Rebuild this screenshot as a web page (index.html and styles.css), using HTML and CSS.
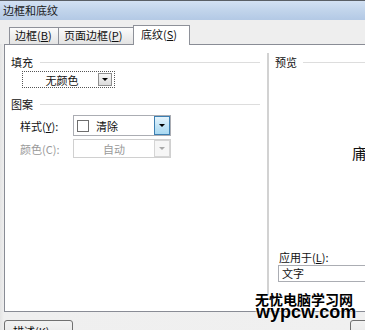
FILE: index.html
```html
<!DOCTYPE html>
<html>
<head>
<meta charset="utf-8">
<link rel="stylesheet" href="styles.css">
</head>
<body>
<div class="titlebar">边框和底纹</div>
<div class="tabs">
  <div class="tab t1">边框(<u>B</u>)</div>
  <div class="tab t2">页面边框(<u>P</u>)</div>
  <div class="tab t3 active">底纹(<u>S</u>)</div>
</div>
<div class="panel">
  <div class="left">
    <div class="head"><span>填充</span></div>
    <div class="combo">
      <span class="combo-text">无颜色</span>
      <span class="mini-btn"><i class="arrow"></i></span>
    </div>
    <div class="head pattern"><span>图案</span></div>
    <div class="row">
      <span class="lbl">样式(<u>Y</u>):</span>
      <div class="select style-sel">
        <span class="swatch"></span>
        <span class="sel-text">清除</span>
        <span class="drop hot"><i class="arrow"></i></span>
      </div>
    </div>
    <div class="row row2 disabled">
      <span class="lbl">颜色(C):</span>
      <div class="select color-sel">
        <span class="sel-text center">自动</span>
        <span class="drop"><i class="arrow"></i></span>
      </div>
    </div>
  </div>
  <div class="right">
    <div class="head"><span>预览</span></div>
    <div class="preview"><span class="sample">庯</span></div>
    <div class="apply-lbl">应用于(<u>L</u>):</div>
    <div class="apply-box">文字</div>
  </div>
</div>
<div class="footer">
  <div class="btn">描述(<u>K</u>)...</div>
  <div class="btn btn-right"></div>
</div>
<div class="watermark">
  <div class="wm1">无忧电脑学习网</div>
  <div class="wm2">wypcw.com</div>
</div>
</body>
</html>
```

FILE: styles.css
```css
html, body {
  margin: 0;
  padding: 0;
}
body {
  width: 365px;
  height: 330px;
  overflow: hidden;
  position: relative;
  background: linear-gradient(90deg, #e4e4e4 0, #efefef 4px, #f0f0f0 100%);
  font-family: "Noto Sans CJK SC", "Liberation Sans", sans-serif;
  font-size: 11px;
  line-height: 14px;
  color: #111;
}
u { text-decoration: underline; }

.titlebar {
  height: 19px;
  border-top: 1px solid #5a5f66;
  background: linear-gradient(180deg, #d3e1f3 0%, #c1d4eb 50%, #b3c9e5 100%);
  padding-left: 3px;
  line-height: 19px;
  font-size: 11px;
  color: #1a1a1a;
}

.tabs {
  display: flex;
  align-items: flex-end;
  height: 24px;
  padding-left: 9px;
  background: #eeeeee;
}
.tab {
  box-sizing: border-box;
  height: 17px;
  line-height: 15px;
  border: 1px solid #8e9199;
  border-bottom: none;
  background: linear-gradient(180deg, #fbfbfb 0%, #efefef 50%, #e3e3e3 100%);
  padding-left: 5px;
  margin-right: -1px;
  white-space: nowrap;
}
.t1 { width: 50px; }
.t2 { width: 76px; }
.t3 { width: 57px; }
.tab.active {
  height: 20px;
  line-height: 17px;
  background: #fff;
  position: relative;
  z-index: 1;
  margin-bottom: -1px;
  padding-left: 7px;
}

.panel {
  box-sizing: border-box;
  display: flex;
  width: 420px;
  height: 268px;
  margin-left: 4px;
  background: #fff;
  border: 1px solid #898c95;
  border-right: none;
}

.left {
  box-sizing: border-box;
  width: 255px;
  flex: none;
  padding: 10px 0 0 6px;
}
.head {
  display: flex;
  align-items: center;
  gap: 7px;
  height: 14px;
  white-space: nowrap;
}
.head::after {
  content: "";
  flex: 1;
  border-top: 1px solid #dddddd;
}
.pattern { margin-top: 9px; }

.combo {
  box-sizing: border-box;
  display: flex;
  align-items: center;
  width: 93px;
  height: 17px;
  margin: 2px 0 0 11px;
  border: 1px dotted #555;
}
.combo-text {
  flex: 1;
  text-align: center;
  padding-left: 3px;
}
.mini-btn {
  box-sizing: border-box;
  display: flex;
  align-items: center;
  justify-content: center;
  width: 14px;
  height: 13px;
  margin-right: 2px;
  border: 1px solid #8f8f8f;
  background: linear-gradient(180deg, #f7f7f7, #dcdcdc);
}
.arrow {
  display: block;
  width: 0;
  height: 0;
  border-left: 3px solid transparent;
  border-right: 3px solid transparent;
  border-top: 3px solid #000;
}

.row {
  display: flex;
  align-items: center;
  margin: 4px 0 0 9px;
}
.row2 { margin-top: 3px; }
.lbl {
  width: 53px;
  flex: none;
  white-space: nowrap;
}
.select {
  box-sizing: border-box;
  display: flex;
  align-items: center;
  width: 98px;
  border: 1px solid #abadb3;
  background: #fff;
}
.style-sel { height: 21px; }
.color-sel { height: 19px; border-color: #d0d0d0; }
.swatch {
  box-sizing: border-box;
  width: 12px;
  height: 12px;
  margin-left: 3px;
  border: 1px solid #6e6e6e;
  background: #fff;
}
.sel-text {
  flex: 1;
  padding-left: 7px;
}
.sel-text.center {
  text-align: center;
  padding-left: 0;
}
.drop {
  box-sizing: border-box;
  display: flex;
  align-items: center;
  justify-content: center;
  width: 16px;
  align-self: stretch;
  border: 1px solid #d5d5d5;
  background: #f6f6f6;
}
.drop.hot {
  border-color: #3c7fb1;
  background: linear-gradient(180deg, #e5f4fc 0%, #c4e5f6 50%, #a9d9f2 100%);
}
.disabled { color: #9a9a9a; }
.disabled .arrow { border-top-color: #a8a8a8; }

.right {
  box-sizing: border-box;
  display: flex;
  flex-direction: column;
  width: 130px;
  height: 242px;
  margin: 8px 0 0 7px;
  padding: 2px 0 13px 6px;
  border-left: 2px solid #d2d2d2;
}
.right .head { gap: 6px; }
.preview {
  padding: 76px 0 0 77px;
  font-size: 15px;
  line-height: 15px;
  white-space: nowrap;
}
.apply-lbl {
  margin: auto 0 0 4px;
  white-space: nowrap;
}
.apply-box {
  box-sizing: border-box;
  height: 17px;
  width: 110px;
  margin: 1px 0 0 3px;
  padding-left: 3px;
  line-height: 15px;
  border: 1px solid #abadb3;
}

.footer {
  display: flex;
  justify-content: space-between;
  margin-top: 8px;
  padding-left: 4px;
}
.btn {
  box-sizing: border-box;
  width: 69px;
  height: 23px;
  padding: 3px 0 0 8px;
  border: 1px solid #707070;
  border-radius: 3px;
  background: linear-gradient(180deg, #f2f2f2 0%, #ebebeb 50%, #dddddd 50%, #cfcfcf 100%);
  white-space: nowrap;
}
.btn-right {
  width: 75px;
  margin-right: -60px;
}

.watermark {
  position: absolute;
  left: 255px;
  top: 292px;
  color: #000;
  font-weight: bold;
  text-shadow: 0 0 2px #fff, 0 0 2px #fff;
}
.wm1 {
  font-family: "Noto Sans CJK SC", sans-serif;
  font-size: 14px;
  line-height: 14px;
}
.wm2 {
  font-family: "Liberation Sans", Arial, sans-serif;
  font-size: 18px;
  line-height: 13px;
  padding-left: 1px;
}
```
